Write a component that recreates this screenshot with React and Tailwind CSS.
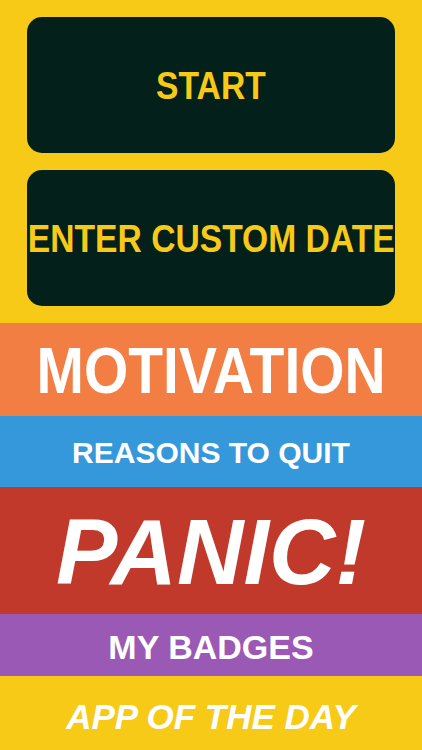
import React from 'react';

function MenuButton({ label }) {
  return (
    <button className="h-[136px] w-full rounded-[15px] bg-[#04201a] flex items-center justify-center overflow-visible">
      <span className="inline-block whitespace-nowrap scale-x-[0.885] text-[#f7ca18] text-[38px] font-bold leading-none pt-[1px]">
        {label}
      </span>
    </button>
  );
}

export default function App() {
  return (
    <div className="w-[422px] h-[750px] flex flex-col font-['Liberation_Sans',Arial,sans-serif] overflow-hidden">
      {/* top buttons */}
      <div className="bg-[#f7ca18] px-[27px] py-[17px] flex flex-col gap-[17px]">
        <MenuButton label="START" />
        <MenuButton label="ENTER CUSTOM DATE" />
      </div>

      <div className="h-[93px] bg-[#f27e44] flex items-center justify-center">
        <span className="inline-block whitespace-nowrap scale-x-[0.89] text-white text-[64px] font-bold leading-none pt-[2px]">
          MOTIVATION
        </span>
      </div>

      <div className="h-[71px] bg-[#3498db] flex items-center justify-center">
        <span className="text-white text-[30px] font-bold leading-none pt-[3px]">REASONS TO QUIT</span>
      </div>

      <div className="h-[127px] bg-[#c0392b] flex items-center justify-center">
        <span className="text-white text-[92px] font-bold italic leading-none pt-[3px]">PANIC!</span>
      </div>

      <div className="h-[62px] bg-[#9b59b6] flex items-center justify-center">
        <span className="text-white text-[34px] font-bold leading-none pt-[3px]">MY BADGES</span>
      </div>

      <div className="flex-1 bg-[#f7ca18] flex items-center justify-center">
        <span className="text-white text-[35px] font-bold italic leading-none pt-[6px]">APP OF THE DAY</span>
      </div>
    </div>
  );
}
